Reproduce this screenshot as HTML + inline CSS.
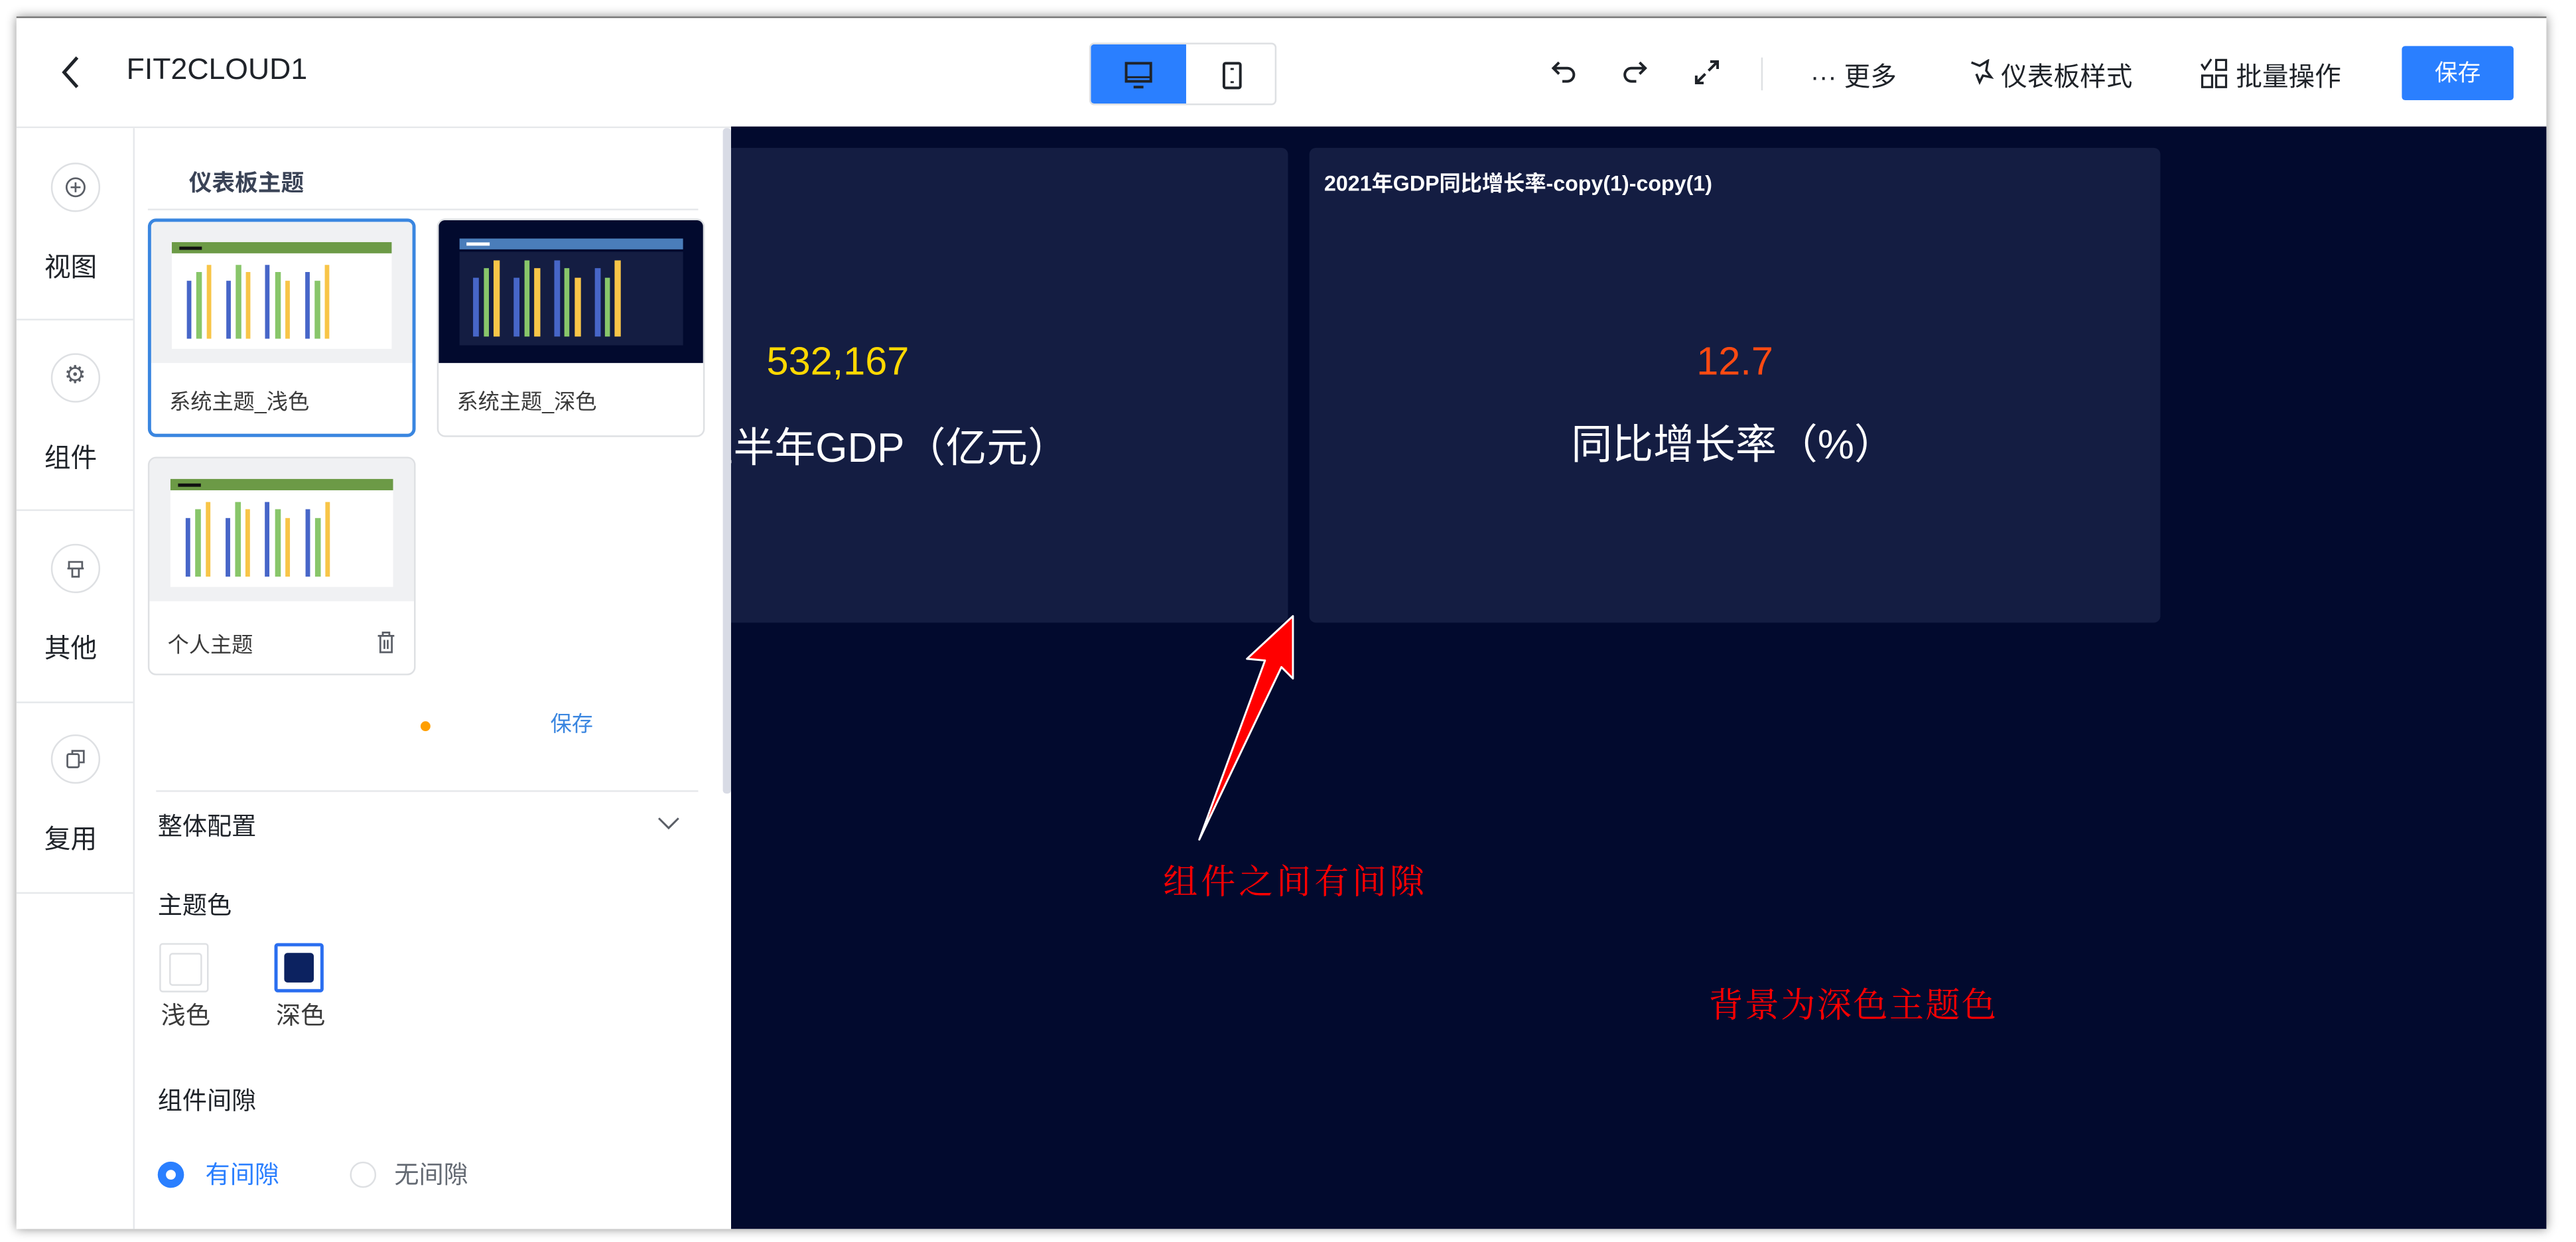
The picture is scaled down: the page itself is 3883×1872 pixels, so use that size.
<!DOCTYPE html>
<html><head><meta charset="utf-8">
<style>
html,body{margin:0;padding:0;width:3883px;height:1871px;overflow:hidden;background:#fff;}
#w{position:absolute;left:0;top:0;width:1568px;height:756px;transform:scale(2.47640);transform-origin:0 0;font-family:"Liberation Sans","Noto Sans CJK SC",sans-serif;color:#1f2329;}
.a{position:absolute;}
#frame{left:10px;top:10px;width:1540px;height:737px;background:#fff;box-shadow:0 0 6px rgba(0,0,0,.45);overflow:hidden;border-top:1px solid #777;}
.t{white-space:nowrap;}
.circ{width:30px;height:30px;border:1px solid #dee0e3;border-radius:50%;box-sizing:border-box;}
.sep{height:1px;background:#e6e8eb;}
.card{border:1px solid #dee0e3;border-radius:5px;box-sizing:border-box;overflow:hidden;background:#fff;}
</style></head><body><div id="w">
<div class="a" id="frame">
 <svg class="a" style="left:25px;top:22px" width="16" height="22" viewBox="0 0 16 22"><path d="M12 2 L4 11 L12 20" fill="none" stroke="#1f2329" stroke-width="2"/></svg>
 <div class="a t" style="left:67px;top:21px;font-size:18px;">FIT2CLOUD1</div>
 <div class="a" style="left:653px;top:15px;width:114px;height:38px;border:1px solid #dee0e3;border-radius:3px;box-sizing:border-box;overflow:hidden;">
  <div class="a" style="left:0;top:0;width:58px;height:38px;background:#2a7fff;"></div>
  <svg class="a" style="left:20px;top:10px" width="18" height="18" viewBox="0 0 18 18"><rect x="1.5" y="1.5" width="15" height="11" fill="none" stroke="#1f2329" stroke-width="1.6"/><line x1="1.5" y1="10" x2="16.5" y2="10" stroke="#1f2329" stroke-width="1.2"/><line x1="6" y1="16" x2="12" y2="16" stroke="#1f2329" stroke-width="1.6"/></svg>
  <svg class="a" style="left:79px;top:10px" width="14" height="18" viewBox="0 0 14 18"><rect x="2" y="1.5" width="10" height="15" rx="1" fill="none" stroke="#1f2329" stroke-width="1.6"/><line x1="6" y1="5" x2="8" y2="5" stroke="#1f2329" stroke-width="1.2"/><line x1="6" y1="13" x2="8" y2="13" stroke="#1f2329" stroke-width="1.2"/></svg>
 </div>
 <svg class="a" style="left:933px;top:24px" width="18" height="18" viewBox="0 0 18 18"><path d="M6 3 L2.5 6.5 L6 10 M3 6.5 H11 A4 4 0 0 1 11 14.5 H8" fill="none" stroke="#1f2329" stroke-width="1.6"/></svg>
 <svg class="a" style="left:976px;top:24px" width="18" height="18" viewBox="0 0 18 18"><path d="M12 3 L15.5 6.5 L12 10 M15 6.5 H7 A4 4 0 0 0 7 14.5 H10" fill="none" stroke="#1f2329" stroke-width="1.6"/></svg>
 <svg class="a" style="left:1020px;top:24px" width="18" height="18" viewBox="0 0 18 18"><path d="M10 8 L15.5 2.5 M11 2.5 H15.5 V7 M8 10 L2.5 15.5 M2.5 11 V15.5 H7" fill="none" stroke="#1f2329" stroke-width="1.6"/></svg>
 <div class="a" style="left:1062px;top:24px;width:1px;height:20px;background:#dee0e3;"></div>
 <div class="a t" style="left:1092px;top:22px;font-size:16px;">··· 更多</div>
 <svg class="a" style="left:1188px;top:25px" width="16" height="16" viewBox="0 0 16 16"><path d="M2 2 L7 4 L12 1 L11 7 L14 11 L9 10 L7 14 L5 9" fill="none" stroke="#1f2329" stroke-width="1.4"/></svg>
 <div class="a t" style="left:1208px;top:22px;font-size:16px;">仪表板样式</div>
 <svg class="a" style="left:1329px;top:24px" width="20" height="20" viewBox="0 0 20 20"><path d="M1 4 L3 7 L7 1" fill="none" stroke="#1f2329" stroke-width="1.3"/><rect x="10" y="1.5" width="6" height="6" fill="none" stroke="#1f2329" stroke-width="1.3"/><rect x="1.5" y="11" width="6" height="7" fill="none" stroke="#1f2329" stroke-width="1.3"/><rect x="10" y="11" width="6" height="7" fill="none" stroke="#1f2329" stroke-width="1.3"/></svg>
 <div class="a t" style="left:1351px;top:22px;font-size:16px;">批量操作</div>
 <div class="a t" style="left:1452px;top:17px;width:68px;height:33px;background:#2a7fff;border-radius:2px;color:#fff;font-size:14px;line-height:33px;text-align:center;">保存</div>
 <div class="a" style="left:0;top:66px;width:1540px;height:1px;background:#e6e8eb;"></div>

 <div class="a" style="left:435px;top:66px;width:1105px;height:671px;background:#020a2e;overflow:hidden;">
  <div class="a" style="left:-209px;top:13px;width:548px;height:289px;background:#141d42;border-radius:4px;">
   <div class="a t" style="left:0;width:548px;top:117px;text-align:center;color:#ffd800;font-size:24px;">532,167</div>
   <div class="a t" style="left:26px;width:548px;top:163px;text-align:center;color:#fff;font-size:25px;">上半年GDP（亿元）</div>
  </div>
  <div class="a" style="left:352px;top:13px;width:518px;height:289px;background:#141d42;border-radius:4px;">
   <div class="a t" style="left:9px;top:11px;color:#fff;font-size:13px;font-weight:bold;">2021年GDP同比增长率-copy(1)-copy(1)</div>
   <div class="a t" style="left:0;width:518px;top:117px;text-align:center;color:#ff4a12;font-size:24px;">12.7</div>
   <div class="a t" style="left:6px;width:504px;top:161px;text-align:center;color:#fff;font-size:25px;">同比增长率（%）</div>
  </div>
  <svg class="a" style="left:0;top:0" width="1105" height="671" viewBox="0 0 1105 671">
   <path d="M342 298 L314 324 L325 325 L285 434 L335 329 L342 336 Z" fill="#ff0000" stroke="#fff" stroke-width="1.2" stroke-linejoin="round"/>
  </svg>
  <div class="a t" style="left:263px;top:444px;color:#ff0000;font-size:21px;letter-spacing:2px;font-family:'Liberation Serif','Noto Serif CJK SC',serif;">组件之间有间隙</div>
  <div class="a t" style="left:595px;top:519px;color:#ff0000;font-size:21px;letter-spacing:1px;font-family:'Liberation Serif','Noto Serif CJK SC',serif;">背景为深色主题色</div>
 </div>

 <div class="a" style="left:0;top:67px;width:71px;height:670px;background:#fff;border-right:1px solid #e6e8eb;">
  <div class="a circ" style="left:21px;top:21px;"></div>
  <svg class="a" style="left:29px;top:29px" width="14" height="14" viewBox="0 0 14 14"><circle cx="7" cy="7" r="5.5" fill="none" stroke="#5a5e66" stroke-width="1.1"/><path d="M7 4 V10 M4 7 H10" stroke="#5a5e66" stroke-width="1.1"/></svg>
  <div class="a t" style="left:17px;top:71px;font-size:16px;">视图</div>
  <div class="a sep" style="left:0;top:116px;width:71px;"></div>
  <div class="a circ" style="left:21px;top:137px;"></div>
  <div class="a t" style="left:29px;top:141px;font-size:15px;color:#5a5e66;">⚙</div>
  <div class="a t" style="left:17px;top:187px;font-size:16px;">组件</div>
  <div class="a sep" style="left:0;top:232px;width:71px;"></div>
  <div class="a circ" style="left:21px;top:253px;"></div>
  <svg class="a" style="left:29px;top:261px" width="14" height="14" viewBox="0 0 14 14"><path d="M3 3 H11 V7 H3 Z M2 7 H12 M5 7 V12 H9 V7" fill="none" stroke="#5a5e66" stroke-width="1.1"/></svg>
  <div class="a t" style="left:17px;top:303px;font-size:16px;">其他</div>
  <div class="a sep" style="left:0;top:349px;width:71px;"></div>
  <div class="a circ" style="left:21px;top:369px;"></div>
  <svg class="a" style="left:29px;top:377px" width="14" height="14" viewBox="0 0 14 14"><rect x="2" y="4" width="7" height="8" rx="1" fill="none" stroke="#5a5e66" stroke-width="1.1"/><path d="M5 4 V2 H12 V9 H9" fill="none" stroke="#5a5e66" stroke-width="1.1"/></svg>
  <div class="a t" style="left:17px;top:419px;font-size:16px;">复用</div>
  <div class="a sep" style="left:0;top:465px;width:71px;"></div>
 </div>

 <div class="a" style="left:72px;top:67px;width:363px;height:670px;background:#fff;">
  <div class="a t" style="left:33px;top:23px;font-size:14px;font-weight:bold;color:#3a4356;">仪表板主题</div>
  <div class="a sep" style="left:8px;top:49px;width:335px;"></div>
  <div class="a card" style="left:8px;top:55px;width:163px;height:133px;border:2px solid #3a86e0;">
   <svg class="a" style="left:0;top:0" width="159" height="86" viewBox="45 325 695 695" preserveAspectRatio="none">
    <rect x="45" y="325" width="695" height="695" fill="#f0f1f3"/>
    <rect x="100" y="425" width="585" height="525" fill="#fff"/>
    <rect x="100" y="425" width="585" height="55" fill="#6c9a46"/>
    <rect x="120" y="447" width="60" height="16" fill="#111"/>
    <g fill="#4766c8"><rect x="140" y="615" width="12" height="285"/><rect x="245" y="615" width="12" height="285"/><rect x="348" y="537" width="12" height="363"/><rect x="455" y="572" width="12" height="328"/></g>
    <g fill="#88c66a"><rect x="165" y="572" width="15" height="328"/><rect x="270" y="537" width="15" height="363"/><rect x="375" y="572" width="15" height="328"/><rect x="480" y="615" width="15" height="285"/></g>
    <g fill="#f8c548"><rect x="193" y="537" width="12" height="363"/><rect x="297" y="572" width="12" height="328"/><rect x="402" y="615" width="12" height="285"/><rect x="507" y="537" width="12" height="363"/></g>
   </svg>
   <div class="a t" style="left:11px;top:99px;font-size:13px;color:#3a3a3a;">系统主题_浅色</div>
  </div>
  <div class="a card" style="left:184px;top:55px;width:163px;height:133px;">
   <svg class="a" style="left:0;top:0" width="161" height="87" viewBox="808 325 684 700" preserveAspectRatio="none">
    <rect x="808" y="325" width="684" height="700" fill="#020a2e"/>
    <rect x="862" y="480" width="578" height="458" fill="#141d42"/>
    <rect x="862" y="415" width="578" height="53" fill="#4a7dba"/>
    <rect x="880" y="434" width="60" height="16" fill="#fff"/>
    <g fill="#4766c8"><rect x="897" y="607" width="15" height="288"/><rect x="1002" y="607" width="15" height="288"/><rect x="1107" y="522" width="15" height="373"/><rect x="1212" y="560" width="15" height="335"/></g>
    <g fill="#88c66a"><rect x="925" y="560" width="13" height="335"/><rect x="1030" y="522" width="13" height="373"/><rect x="1133" y="560" width="13" height="335"/><rect x="1238" y="607" width="13" height="288"/></g>
    <g fill="#f8c548"><rect x="950" y="522" width="16" height="373"/><rect x="1055" y="560" width="16" height="335"/><rect x="1160" y="607" width="16" height="288"/><rect x="1263" y="522" width="16" height="373"/></g>
   </svg>
   <div class="a t" style="left:11px;top:100px;font-size:13px;color:#3a3a3a;">系统主题_深色</div>
  </div>
  <div class="a card" style="left:8px;top:200px;width:163px;height:133px;">
   <svg class="a" style="left:0;top:0" width="161" height="87" viewBox="45 325 695 695" preserveAspectRatio="none">
    <rect x="45" y="325" width="695" height="695" fill="#f0f1f3"/>
    <rect x="100" y="425" width="585" height="525" fill="#fff"/>
    <rect x="100" y="425" width="585" height="55" fill="#6c9a46"/>
    <rect x="120" y="447" width="60" height="16" fill="#111"/>
    <g fill="#4766c8"><rect x="140" y="615" width="12" height="285"/><rect x="245" y="615" width="12" height="285"/><rect x="348" y="537" width="12" height="363"/><rect x="455" y="572" width="12" height="328"/></g>
    <g fill="#88c66a"><rect x="165" y="572" width="15" height="328"/><rect x="270" y="537" width="15" height="363"/><rect x="375" y="572" width="15" height="328"/><rect x="480" y="615" width="15" height="285"/></g>
    <g fill="#f8c548"><rect x="193" y="537" width="12" height="363"/><rect x="297" y="572" width="12" height="328"/><rect x="402" y="615" width="12" height="285"/><rect x="507" y="537" width="12" height="363"/></g>
   </svg>
   <div class="a t" style="left:11px;top:103px;font-size:13px;color:#3a3a3a;">个人主题</div>
   <svg class="a" style="left:138px;top:105px" width="12" height="14" viewBox="0 0 12 14"><path d="M1 3 H11 M4 3 V1 H8 V3 M2.5 3 V13 H9.5 V3 M5 5.5 V11 M7 5.5 V11" fill="none" stroke="#5a5e66" stroke-width="1.1"/></svg>
  </div>
  <div class="a" style="left:174px;top:361px;width:6px;height:6px;border-radius:50%;background:#ff9f00;"></div>
  <div class="a t" style="left:253px;top:352px;font-size:13px;color:#3a86e0;">保存</div>
  <div class="a sep" style="left:13px;top:403px;width:330px;"></div>
  <div class="a t" style="left:14px;top:414px;font-size:15px;">整体配置</div>
  <svg class="a" style="left:318px;top:418px" width="14" height="10" viewBox="0 0 14 10"><path d="M1 2 L7 8 L13 2" fill="none" stroke="#5a5e66" stroke-width="1.2"/></svg>
  <div class="a t" style="left:14px;top:462px;font-size:15px;">主题色</div>
  <div class="a" style="left:15px;top:496px;width:30px;height:30px;border:1px solid #dee0e3;border-radius:2px;box-sizing:border-box;"><div class="a" style="left:5px;top:5px;width:18px;height:18px;border:1px solid #dee0e3;border-radius:2px;"></div></div>
  <div class="a" style="left:85px;top:496px;width:30px;height:30px;border:2px solid #2a6ef0;border-radius:2px;box-sizing:border-box;"><div class="a" style="left:4px;top:4px;width:18px;height:18px;background:#0c2260;border-radius:2px;"></div></div>
  <div class="a t" style="left:16px;top:529px;font-size:15px;color:#3a3a3a;">浅色</div>
  <div class="a t" style="left:86px;top:529px;font-size:15px;color:#3a3a3a;">深色</div>
  <div class="a t" style="left:14px;top:581px;font-size:15px;">组件间隙</div>
  <div class="a" style="left:14px;top:629px;width:16px;height:16px;border-radius:50%;background:#2a7fff;"><div class="a" style="left:5px;top:5px;width:6px;height:6px;border-radius:50%;background:#fff;"></div></div>
  <div class="a t" style="left:43px;top:626px;font-size:15px;color:#2a7fff;">有间隙</div>
  <div class="a" style="left:131px;top:629px;width:16px;height:16px;border-radius:50%;border:1px solid #dee0e3;box-sizing:border-box;"></div>
  <div class="a t" style="left:158px;top:626px;font-size:15px;color:#646a73;">无间隙</div>
  <div class="a" style="left:358px;top:0;width:5px;height:405px;background:#d8dbe5;border-radius:2px;"></div>
 </div>
</div>
</div></body></html>
